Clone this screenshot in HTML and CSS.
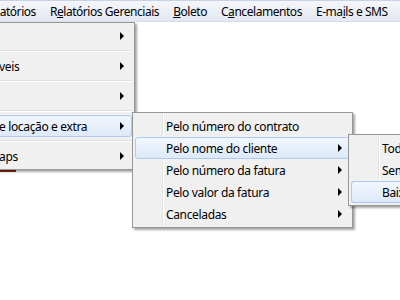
FILE: index.html
```html
<!DOCTYPE html>
<html lang="pt-BR">

<head>
    <meta charset="UTF-8">
    <title>Menu</title>
    <link rel="stylesheet" href="styles.css">
</head>

<body>
    <!-- barra de menu -->
    <div class="menubar">
        <span class="mb-item first">latórios</span>
        <span class="mb-item">R<u>e</u>latórios Gerenciais</span>
        <span class="mb-item"><u>B</u>oleto</span>
        <span class="mb-item">C<u>a</u>ncelamentos</span>
        <span class="mb-item">E-ma<u>i</u>ls e SMS</span>
    </div>

    <div class="page">
        <div class="red-mark"></div>
    </div>

    <!-- menu aberto -->
    <div class="menu menu-main">
        <div class="item"><span class="label"></span><i class="arrow"></i></div>
        <div class="sep"></div>
        <div class="item"><span class="label">veis</span><i class="arrow"></i></div>
        <div class="sep"></div>
        <div class="item"><span class="label"></span><i class="arrow"></i></div>
        <div class="sep"></div>
        <div class="item active"><span class="label">e locação e extra</span><i class="arrow"></i></div>
        <div class="sep"></div>
        <div class="item"><span class="label">aps</span><i class="arrow"></i></div>
    </div>

    <!-- submenu -->
    <div class="menu menu-sub">
        <div class="item"><span class="label">Pelo número do contrato</span></div>
        <div class="item active"><span class="label">Pelo nome do cliente</span><i class="arrow"></i></div>
        <div class="item"><span class="label">Pelo número da fatura</span><i class="arrow"></i></div>
        <div class="item"><span class="label">Pelo valor da fatura</span><i class="arrow"></i></div>
        <div class="item"><span class="label">Canceladas</span><i class="arrow"></i></div>
    </div>

    <!-- submenu do submenu -->
    <div class="menu menu-sub2">
        <div class="item"><span class="label">Todas</span></div>
        <div class="item"><span class="label">Sem baixa</span></div>
        <div class="item active"><span class="label">Baixadas</span></div>
    </div>
</body>

</html>
```

FILE: styles.css
```css
* {
    margin: 0;
    padding: 0;
    box-sizing: border-box;
}

body {
    width: 400px;
    height: 300px;
    overflow: hidden;
    background-color: #fff;
    font-family: "Noto Sans", "Open Sans", sans-serif;
    font-size: 12px;
    letter-spacing: -0.35px;
    color: #000;
    position: relative;
}

/* barra de menu */
.menubar {
    height: 22px;
    display: flex;
    align-items: center;
    white-space: nowrap;
    letter-spacing: -0.45px;
    border-top: 1px solid #c6d3e6;
    border-bottom: 1px solid #d9dfe8;
    background: linear-gradient(#f4f6fa, #e3e8f0);
}

.mb-item {
    padding: 0 7px;
}

.mb-item.first {
    padding-left: 0;
    margin-left: -3px;
}

.page {
    height: 278px;
    padding-top: 148px;
}

.red-mark {
    width: 16px;
    height: 2px;
    background-color: #8b2a10;
}

/* menus */
.menu {
    position: absolute;
    background-color: #f0f0f0;
    border: 1px solid #979797;
    padding: 2px;
    box-shadow: 2px 2px 2px rgba(0, 0, 0, 0.35);
    /* linha do icone */
    background-image: linear-gradient(to right, transparent 29px, #e2e3e3 29px, #e2e3e3 30px, #fff 30px, #fff 31px, transparent 31px);
    overflow: hidden;
    white-space: nowrap;
}

.menu-main {
    top: 22px;
    left: -35px;
    width: 170px;
    z-index: 1;
}

.menu-sub {
    top: 112px;
    left: 132px;
    width: 221px;
    z-index: 2;
}

.menu-sub2 {
    top: 134px;
    left: 348px;
    width: 52px;
    border-right: 0;
    z-index: 3;
}

.item {
    height: 22px;
    display: flex;
    align-items: center;
    padding: 0 7px 0 31px;
    border: 1px solid transparent;
    border-radius: 3px;
}

.menu-sub2 .item {
    padding-right: 0;
    border-top-right-radius: 0;
    border-bottom-right-radius: 0;
    border-right: 0;
    margin-right: -2px;
}

.item .label {
    flex: 1;
    margin-left: -1px;
    overflow: hidden;
}

.item.active {
    border-color: #aecaf0;
    background: linear-gradient(#f2f7fe, #dde9f8);
}

.arrow {
    width: 0;
    height: 0;
    border-left: 4px solid #000;
    border-top: 4px solid transparent;
    border-bottom: 4px solid transparent;
}

.sep {
    height: 8px;
    margin-left: -3px;
    background: linear-gradient(transparent 3px, #e0e0e0 3px, #e0e0e0 4px, #fff 4px, #fff 5px, transparent 5px);
}
```
